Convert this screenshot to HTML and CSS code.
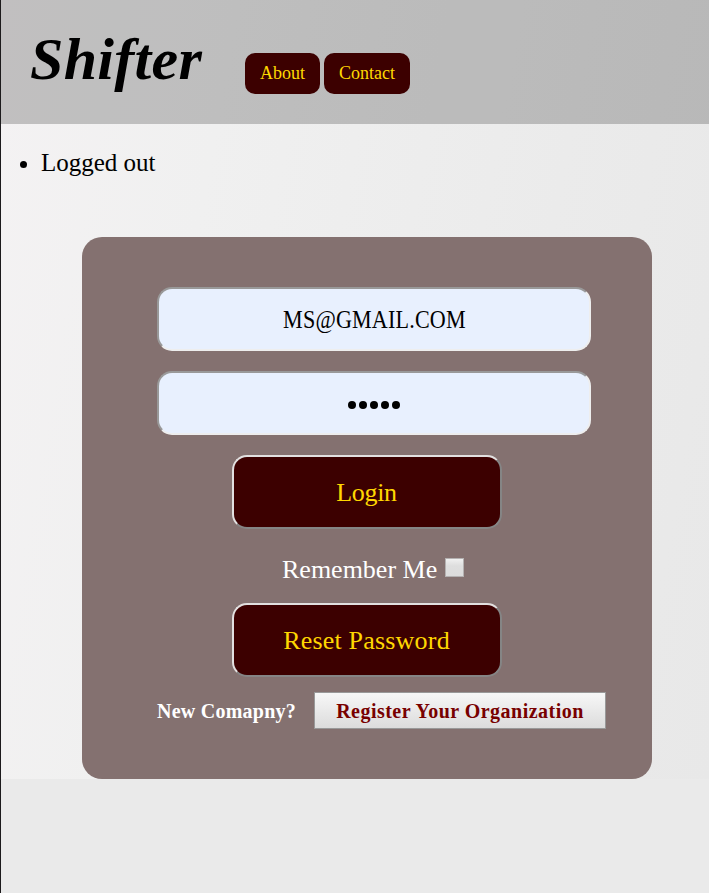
FILE: index.html
```html
<!DOCTYPE html>
<html lang="en">
<head>
<meta charset="utf-8">
<title>Shifter</title>
<link rel="stylesheet" href="styles.css">
</head>
<body>
<div class="page">
  <header class="header">
    <h1 class="brand">Shifter</h1>
    <nav class="nav"><a class="nav-link">About</a><a class="nav-link">Contact</a></nav>
  </header>
  <ul class="messages"><li>Logged out</li></ul>
  <form class="card">
    <div class="field email" role="textbox" aria-label="Email"><span>MS@GMAIL.COM</span></div>
    <div class="field dots" role="textbox" aria-label="Password"><i></i><i></i><i></i><i></i><i></i></div>
    <button class="btn" type="button">Login</button>
    <div class="remember"><span>Remember Me</span><span class="check" role="checkbox" aria-checked="false"></span></div>
    <button class="btn reset" type="button">Reset Password</button>
    <div class="signup"><b class="new">New Comapny?</b><button class="register" type="button">Register Your Organization</button></div>
  </form>
</div>
</body>
</html>
```
FILE: styles.css
```css
* { box-sizing: border-box; }
body {
  margin: 0;
  min-height: 893px;
  background: #eaeaea;
  border-left: 1px solid #1c1a1c;
  font-family: "Liberation Serif", serif;
  color: #000;
  overflow: hidden;
}
.page {
  height: 779px;
  background: linear-gradient(100deg, #f4f2f3 0%, #f0f0f0 28%, #ebebeb 70%, #e8e8e8 100%);
}
.header {
  height: 124px;
  display: flex;
  align-items: flex-start;
  background: rgba(0, 0, 0, .208);
}
.brand {
  margin: 25px 0 0 29px;
  width: 215px;
  font-size: 60px;
  line-height: 68px;
  font-style: italic;
  letter-spacing: .3px;
}
.nav { display: flex; gap: 4px; margin-top: 53px; }
.nav-link {
  height: 41px;
  padding: 0 15px;
  line-height: 41px;
  font-size: 18px;
  color: #ffd700;
  background: #3c0000;
  border-radius: 10px;
}
.messages {
  margin: 24px 0 0;
  padding-left: 40px;
  font-size: 25px;
  line-height: 29px;
}
.card {
  display: flex;
  flex-direction: column;
  align-items: flex-start;
  width: 570px;
  height: 542px;
  margin: 60px 0 0 81px;
  padding: 50px 0 0 75px;
  background: #847170;
  border-radius: 20px;
}
.field {
  display: flex;
  justify-content: center;
  align-items: center;
  width: 434px;
  height: 64px;
  margin: 0 0 20px;
  padding: 0;
  border: 2px solid;
  border-color: #999 #eee #eee #999;
  border-radius: 15px;
  background: #e8f0fe;
}
.email {
  font-size: 26px;
  padding-top: 1px;
}
.email span {
  letter-spacing: .2px;
  transform: scaleX(.85);
}
.dots {
  gap: 3px;
  padding-top: 4px;
}
.dots i { width: 8px; height: 8px; border-radius: 50%; background: #000; }
.btn {
  width: 270px;
  height: 74px;
  margin-left: 75px;
  padding: 2px 1px 0 0;
  flex-shrink: 0;
  border: 2px solid;
  border-color: #e2e0e0 #858585 #858585 #e2e0e0;
  border-radius: 15px;
  background: #3c0000;
  color: #ffd700;
  font: 26px "Liberation Serif", serif;
  letter-spacing: -.3px;
}
.reset { letter-spacing: .2px; }
.remember {
  display: flex;
  height: 74px;
  padding: 24px 0 0 125px;
  font-size: 26px;
  line-height: 34px;
  color: #fff;
}
.check {
  width: 19px;
  height: 19px;
  margin: 5px 0 0 8px;
  border: 1px solid #b4b1b1;
  background: linear-gradient(#f0f0f0, #dedede 40%, #dcdcdc);
}
.signup {
  display: flex;
  align-items: center;
  margin-top: 15px;
  height: 37px;
  font-size: 20px;
}
.new { width: 157px; padding-top: 2px; color: #fff; letter-spacing: .25px; white-space: nowrap; }
.register {
  width: 292px;
  height: 37px;
  padding: 2px 0 0;
  border: 1px solid #999;
  background: linear-gradient(#f7f7f7, #dcdcdc);
  color: #780000;
  font: bold 20px "Liberation Serif", serif;
  letter-spacing: .48px;
  white-space: nowrap;
}
```
